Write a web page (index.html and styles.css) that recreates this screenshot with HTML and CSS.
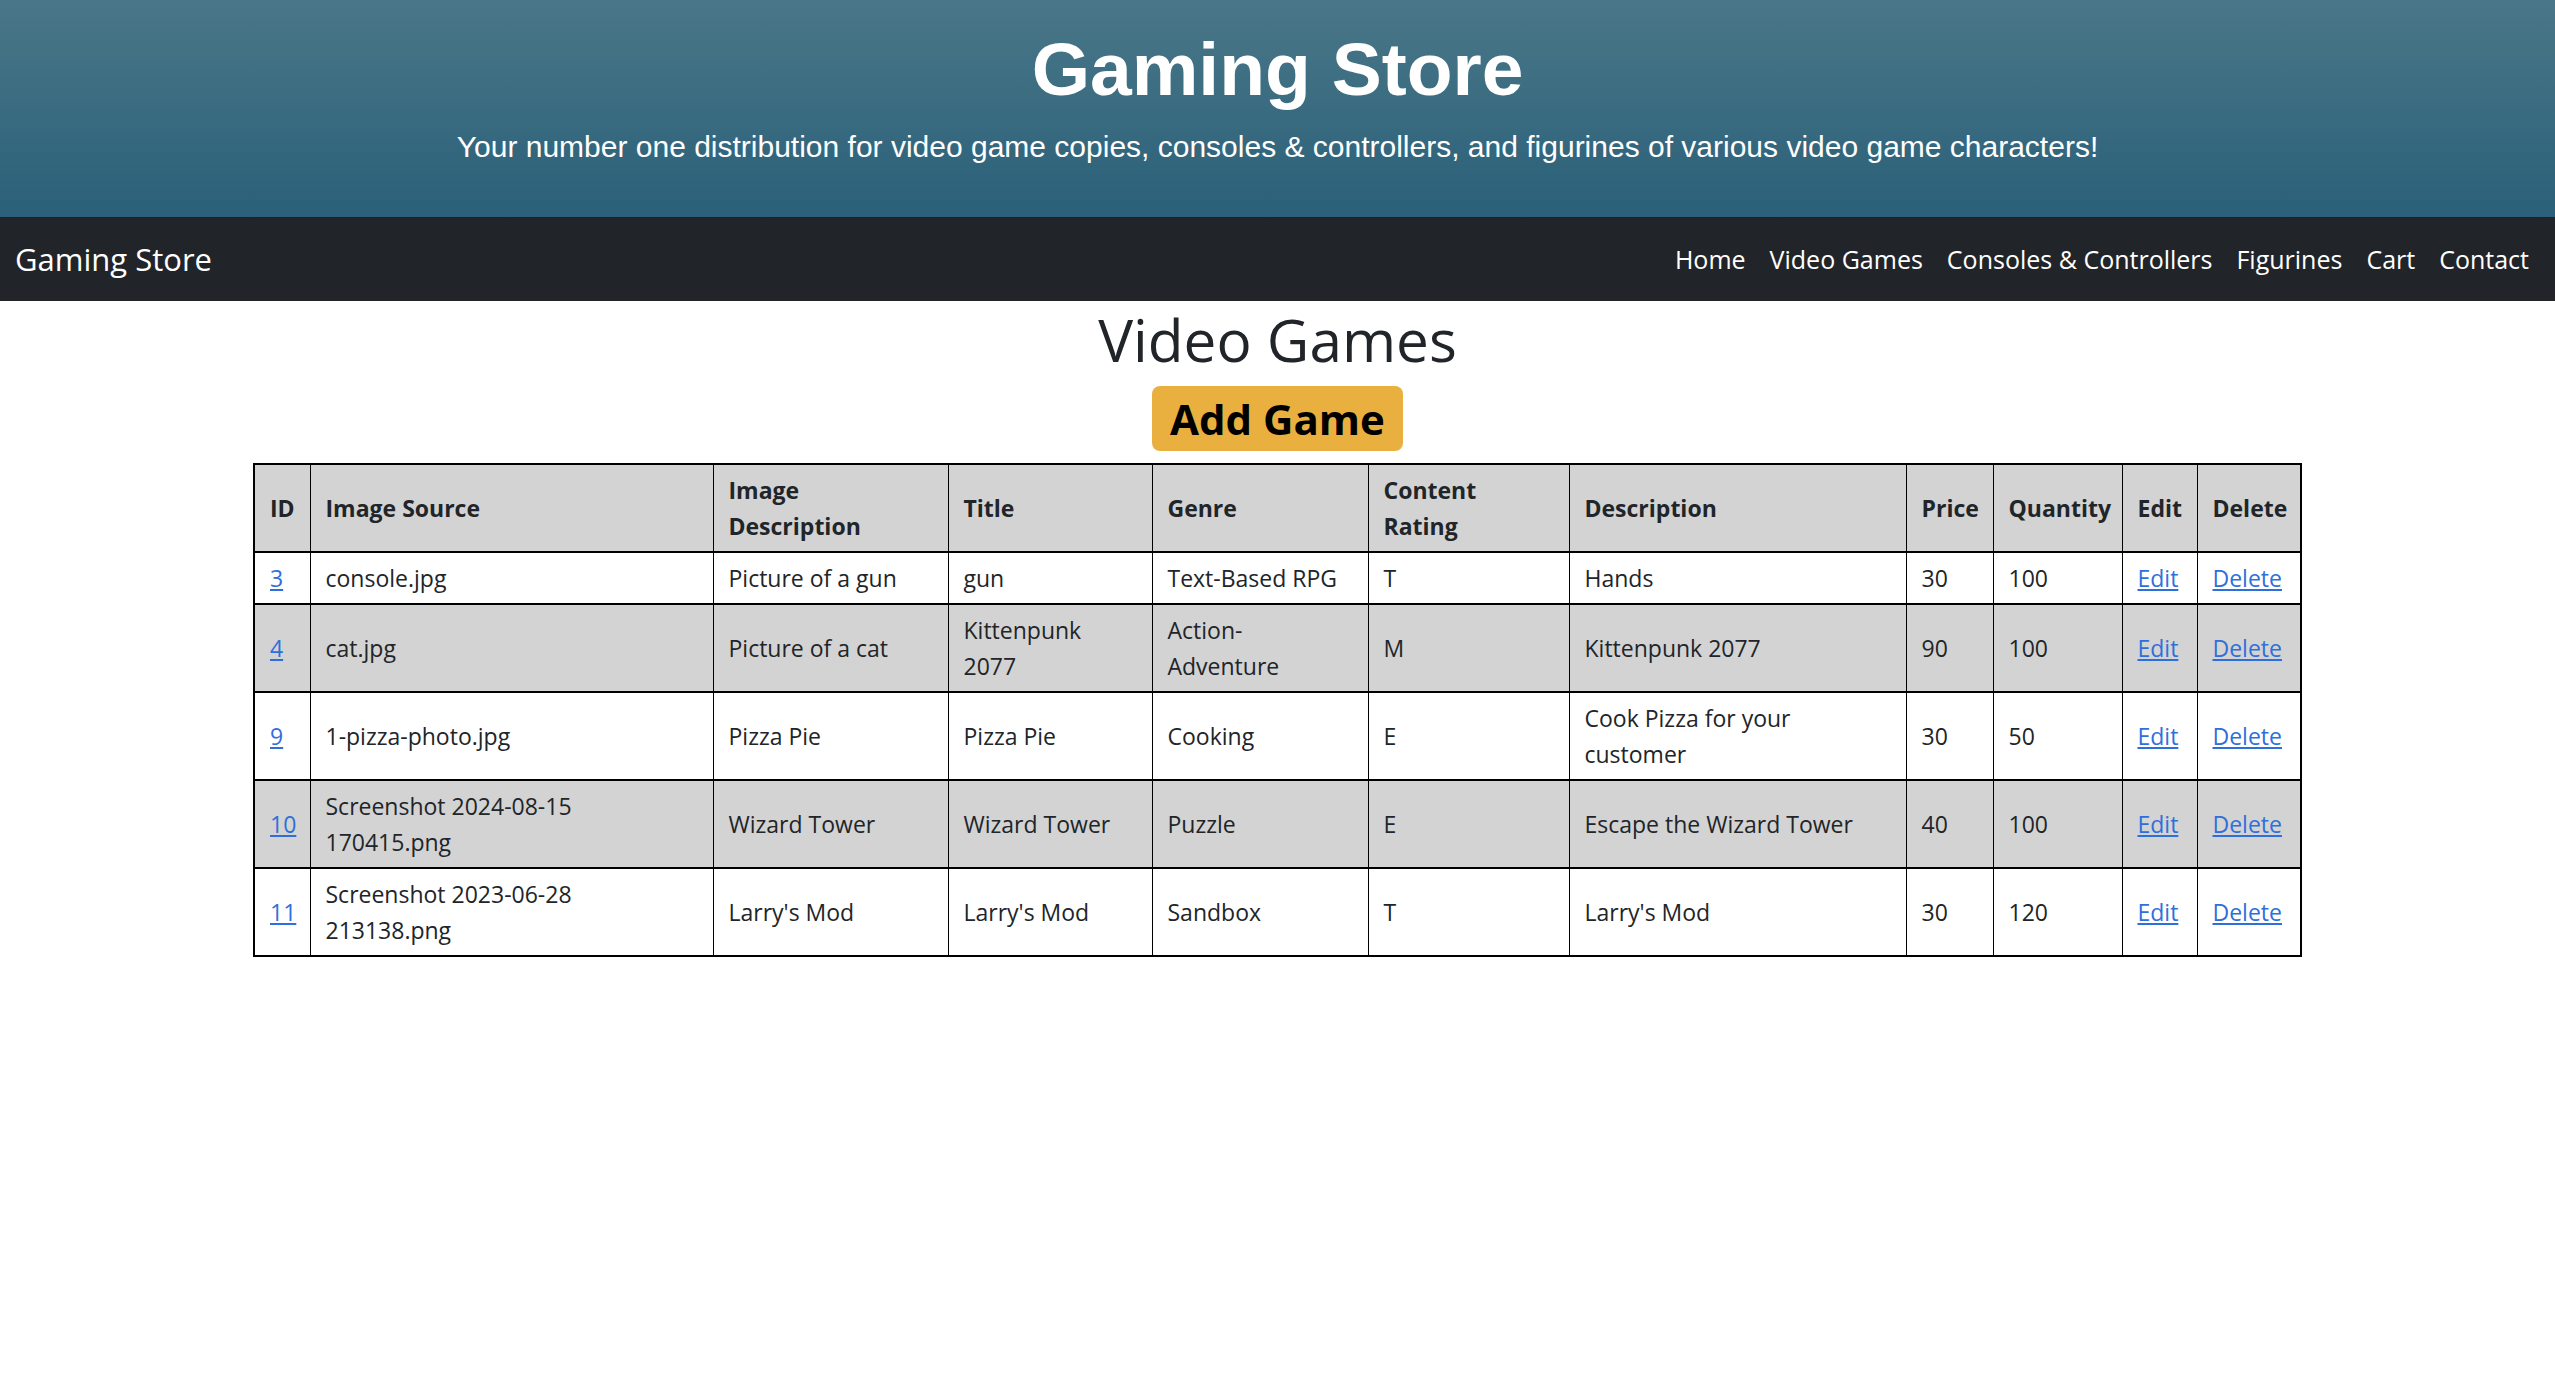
FILE: index.html
```html
<!DOCTYPE html>
<html lang="en">
<head>
<meta charset="utf-8">
<title>Gaming Store - Video Games</title>
<link rel="stylesheet" href="styles.css">
</head>
<body>
<header class="hero">
  <h1 class="hero-title">Gaming Store</h1>
  <p class="hero-sub">Your number one distribution for video game copies, consoles &amp; controllers, and figurines of various video game characters!</p>
</header>
<nav class="navbar">
  <a class="brand" href="#">Gaming Store</a>
  <ul class="nav-links">
    <li><a href="#">Home</a></li>
    <li><a href="#">Video Games</a></li>
    <li><a href="#">Consoles &amp; Controllers</a></li>
    <li><a href="#">Figurines</a></li>
    <li><a href="#">Cart</a></li>
    <li><a href="#">Contact</a></li>
  </ul>
</nav>
<main class="content">
  <h1 class="page-title">Video Games</h1>
  <a class="btn-add" href="#">Add Game</a>
  <table class="games">
    <colgroup>
      <col class="c-id"><col class="c-src"><col class="c-idesc"><col class="c-title"><col class="c-genre"><col class="c-rating"><col class="c-desc"><col class="c-price"><col class="c-qty"><col class="c-edit"><col class="c-del">
    </colgroup>
    <thead>
      <tr><th>ID</th><th>Image Source</th><th>Image Description</th><th>Title</th><th>Genre</th><th>Content Rating</th><th>Description</th><th>Price</th><th>Quantity</th><th>Edit</th><th>Delete</th></tr>
    </thead>
    <tbody>
      <tr><td><a href="#">3</a></td><td>console.jpg</td><td>Picture of a gun</td><td>gun</td><td>Text-Based RPG</td><td>T</td><td>Hands</td><td>30</td><td>100</td><td><a href="#">Edit</a></td><td><a href="#">Delete</a></td></tr>
      <tr class="alt"><td><a href="#">4</a></td><td>cat.jpg</td><td>Picture of a cat</td><td>Kittenpunk 2077</td><td>Action-Adventure</td><td>M</td><td>Kittenpunk 2077</td><td>90</td><td>100</td><td><a href="#">Edit</a></td><td><a href="#">Delete</a></td></tr>
      <tr><td><a href="#">9</a></td><td>1-pizza-photo.jpg</td><td>Pizza Pie</td><td>Pizza Pie</td><td>Cooking</td><td>E</td><td>Cook Pizza for your customer</td><td>30</td><td>50</td><td><a href="#">Edit</a></td><td><a href="#">Delete</a></td></tr>
      <tr class="alt"><td><a href="#">10</a></td><td>Screenshot 2024-08-15 170415.png</td><td>Wizard Tower</td><td>Wizard Tower</td><td>Puzzle</td><td>E</td><td>Escape the Wizard Tower</td><td>40</td><td>100</td><td><a href="#">Edit</a></td><td><a href="#">Delete</a></td></tr>
      <tr><td><a href="#">11</a></td><td>Screenshot 2023-06-28 213138.png</td><td>Larry's Mod</td><td>Larry's Mod</td><td>Sandbox</td><td>T</td><td>Larry's Mod</td><td>30</td><td>120</td><td><a href="#">Edit</a></td><td><a href="#">Delete</a></td></tr>
    </tbody>
  </table>
</main>
</body>
</html>
```

FILE: styles.css
```css
* { box-sizing: border-box; }

html, body {
  margin: 0;
  padding: 0;
  background: #ffffff;
}

body {
  font-family: "Open Sans", "Noto Sans", sans-serif;
  font-size: 23px;
  line-height: 36px;
  color: #212529;
}

.hero {
  height: 217px;
  padding-top: 26px;
  background: linear-gradient(to bottom, #4a7788, #2a6079);
  text-align: center;
  color: #ffffff;
  font-family: "Liberation Sans", Arial, sans-serif;
}

.hero-title {
  margin: 0;
  font-size: 75px;
  line-height: 86px;
  font-weight: 700;
}

.hero-sub {
  margin: 18px 0 0;
  font-size: 30px;
  line-height: 34px;
}

.navbar {
  height: 84px;
  background: #212529;
  display: flex;
  align-items: center;
  justify-content: space-between;
  padding: 0 14px 0 15px;
}

.brand {
  color: #ffffff;
  text-decoration: none;
  font-size: 31px;
  line-height: 45px;
}

.nav-links {
  list-style: none;
  margin: 0;
  padding: 0;
  display: flex;
}

.nav-links a {
  display: block;
  padding: 0 12px;
  color: #ffffff;
  text-decoration: none;
  font-size: 25px;
  line-height: 36px;
}

.content {
  display: flex;
  flex-direction: column;
  align-items: center;
}

.page-title {
  margin: 2px 0 11px;
  font-size: 58.5px;
  line-height: 72px;
  font-weight: 500;
  color: #212529;
}

.btn-add {
  display: block;
  width: 251px;
  height: 65px;
  background: #e9b040;
  border-radius: 8px;
  color: #000000;
  text-align: center;
  text-decoration: none;
  font-size: 42px;
  font-weight: 700;
  line-height: 65px;
}

.games {
  margin-top: 12px;
  width: 2048px;
  table-layout: fixed;
  border-collapse: collapse;
  border: 2px solid #000000;
}

.games th,
.games td {
  padding: 7px 15px;
  border-top: 2px solid #000000;
  border-bottom: 2px solid #000000;
  border-left: 1px solid #000000;
  border-right: 1px solid #000000;
  text-align: left;
  vertical-align: middle;
  font-weight: 400;
}

.games th {
  font-weight: 700;
  background: #d3d3d3;
}

.games tr.alt td {
  background: #d3d3d3;
}

.games a {
  color: #2f6fdb;
  text-decoration: underline;
}

.c-id { width: 56px; }
.c-src { width: 403px; }
.c-idesc { width: 235px; }
.c-title { width: 204px; }
.c-genre { width: 216px; }
.c-rating { width: 201px; }
.c-desc { width: 337px; }
.c-price { width: 87px; }
.c-qty { width: 129px; }
.c-edit { width: 75px; }
.c-del { width: 104px; }
```
